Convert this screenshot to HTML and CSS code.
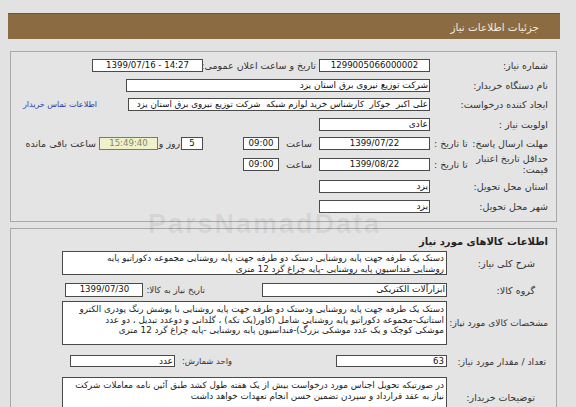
FILE: index.html
```html
<!DOCTYPE html>
<html lang="fa">
<head>
<meta charset="utf-8">
<title>جزئیات اطلاعات نیاز</title>
<link rel="stylesheet" href="styles.css">
</head>
<body>
<div class="page">
  <div class="header"><span class="title">جزئیات اطلاعات نیاز</span></div>

  <div class="panel p1">
    <div class="row">
      <div class="lbl">شماره نیاز:</div>
      <div class="box w111 center">1299005066000002</div>
      <div class="lbl-pub">تاریخ و ساعت اعلان عمومی:</div>
      <div class="box w111 center ltr">1399/07/16 - 14:27</div>
    </div>
    <div class="row">
      <div class="lbl">نام دستگاه خریدار:</div>
      <div class="box w304 txt">شرکت توزیع نیروی برق استان یزد</div>
    </div>
    <div class="row">
      <div class="lbl">ایجاد کننده درخواست:</div>
      <div class="box w302 txt long">علی اکبر  جوکار  کارشناس خرید لوازم شبکه  شرکت توزیع نیروی برق استان یزد</div>
      <a class="contact" href="#">اطلاعات تماس خریدار</a>
    </div>
    <div class="row">
      <div class="lbl">اولویت نیاز :</div>
      <div class="box w111 txt">عادی</div>
    </div>
    <div class="row">
      <div class="lbl split"><span>مهلت ارسال پاسخ:</span><span>تا تاریخ :</span></div>
      <div class="box w111 center">1399/07/22</div>
      <div class="hour">ساعت</div>
      <div class="box w36 center">09:00</div>
      <div class="box w22 center days">5</div>
      <div class="daylbl">روز و</div>
      <div class="box w59 center remain">15:49:40</div>
      <div class="remainlbl">ساعت باقی مانده</div>
    </div>
    <div class="row tall">
      <div class="lbl split"><span class="two">حداقل تاریخ اعتبار<br>قیمت:</span><span>تا تاریخ :</span></div>
      <div class="box w111 center">1399/08/22</div>
      <div class="hour">ساعت</div>
      <div class="box w36 center">09:00</div>
    </div>
    <div class="row r7">
      <div class="lbl">استان محل تحویل:</div>
      <div class="box w111 txt">یزد</div>
    </div>
    <div class="row">
      <div class="lbl">شهر محل تحویل:</div>
      <div class="box w111 txt">یزد</div>
    </div>
  </div>

  <div class="panel p2">
    <div class="ptitle">اطلاعات کالاهای مورد نیاز</div>
    <div class="row2 ta1">
      <div class="lbl2">شرح کلی نیاز:</div>
      <div class="area">دستک یک طرفه جهت پایه روشنایی دستک دو طرفه جهت پایه روشنایی مجموعه دکوراتیو پایه<br>روشنایی فنداسیون پایه روشنایی -پایه چراغ گرد 12 متری</div>
    </div>
    <div class="row2 grp">
      <div class="lbl2">گروه کالا:</div>
      <div class="box w185 txt">ابزارآلات الکتریکی</div>
      <div class="needlbl">تاریخ نیاز به کالا:</div>
      <div class="box w78 center">1399/07/30</div>
    </div>
    <div class="row2 ta2">
      <div class="lbl2 wide">مشخصات کالای مورد نیاز:</div>
      <div class="area">دستک یک طرفه جهت پایه روشنایی ودستک دو طرفه جهت پایه روشنایی با پوشش رنگ پودری الکترو<br>استاتیک-مجموعه دکوراتیو پایه روشنایی شامل (کاور(یک تکه) ، گلدانی و دوعدد تبدیل ، دو عدد<br>موشکی کوچک و یک عدد موشکی بزرگ)-فنداسیون پایه روشنایی -پایه چراغ گرد 12 متری</div>
    </div>
    <div class="row2 cnt">
      <div class="lbl2 mid">تعداد / مقدار مورد نیاز:</div>
      <div class="box w111 num">63</div>
      <div class="unitlbl">واحد شمارش:</div>
      <div class="box w105 txt">عدد</div>
    </div>
    <div class="row2 ta3">
      <div class="lbl2">توضیحات خریدار:</div>
      <div class="area">در صورتیکه تحویل اجناس مورد درخواست بیش از یک هفته طول کشد طبق آئین نامه معاملات شرکت<br>نیاز به عقد قرارداد و سپردن تضمین حسن انجام تعهدات خواهد داشت</div>
    </div>
  </div>

  <div class="watermark">ParsNamadData</div>
</div>
</body>
</html>
```

FILE: styles.css
```css
html, body {
  margin: 0;
  padding: 0;
  background: #e2e2e2;
}
body {
  font-family: "DejaVu Sans", "Noto Sans", sans-serif;
  font-size: 9.5px;
  color: #2b2b2b;
  overflow: hidden;
}
.page {
  position: relative;
  padding-top: 13px;
  height: 407px;
  box-sizing: border-box;
}
.header {
  margin-left: 8px;
  margin-right: 16px;
  height: 26px;
  background: #8b6b42;
  border-top: 1px solid #6e532f;
  box-sizing: border-box;
  direction: rtl;
  display: flex;
  align-items: center;
  padding-right: 21px;
}
.title {
  color: #f4ecdc;
  font-size: 10.4px;
}
.panel {
  margin-left: 10px;
  margin-right: 19px;
  border: 1px solid #a9a9a9;
  background: #e4e4e4;
  direction: rtl;
  box-sizing: border-box;
  padding-right: 8px;
}
.p1 {
  margin-top: 12px;
  height: 171px;
  padding-top: 4px;
}
.row {
  display: flex;
  align-items: center;
  height: 19.5px;
  white-space: nowrap;
}
.row.tall { height: 22px; }
.row.r7 { height: 21px; }
.lbl {
  width: 118px;
  flex: none;
  color: #333;
}
.lbl.split {
  display: flex;
  justify-content: space-between;
  align-items: center;
  padding-left: 4px;
  box-sizing: border-box;
}
.two { line-height: 10.5px; }
.box {
  box-sizing: border-box;
  height: 13px;
  border: 1px solid #4a4a4a;
  background: #fff;
  color: #111;
  flex: none;
  padding: 0 2px;
  line-height: 11px;
  overflow: hidden;
  white-space: nowrap;
  text-align: right;
  font-size: 8.6px;
}
.box.txt { font-size: 9px; padding: 0 1px; }
.box.long { font-size: 8.7px; white-space: pre; }
.center { text-align: center; }
.ltr { direction: ltr; }
.num { text-align: right; direction: ltr; }
.w111 { width: 111px; }
.w304 { width: 304px; }
.w302 { width: 302px; }
.w36 { width: 36px; }
.w22 { width: 22px; }
.w59 { width: 59px; }
.w185 { width: 185px; }
.w78 { width: 78px; }
.w105 { width: 105px; }
.lbl-pub {
  width: 116px;
  flex: none;
  padding-right: 3px;
  box-sizing: border-box;
  color: #333;
}
.contact {
  margin-right: 31px;
  color: #2f3aa6;
  text-decoration: none;
  font-size: 8px;
}
.hour {
  width: 40px;
  flex: none;
  text-align: center;
  color: #333;
}
.days { margin-right: 40px; }
.daylbl {
  width: 23px;
  flex: none;
  text-align: center;
  color: #333;
}
.remain {
  background: #f1f1c9;
  color: #85856a;
  border-color: #7a7a6a;
}
.remainlbl {
  margin-right: 3px;
  color: #333;
}
.p2 {
  margin-top: 6px;
  height: 200px;
  padding-top: 4px;
}
.ptitle {
  height: 18px;
  line-height: 18px;
  font-weight: bold;
  font-size: 10px;
  color: #222;
}
.row2 {
  display: flex;
  align-items: center;
  white-space: nowrap;
}
.lbl2 {
  width: 101px;
  flex: none;
  color: #333;
  padding-right: 13px;
  box-sizing: border-box;
}
.lbl2.wide { padding-right: 0; font-size: 9px; }
.lbl2.mid { padding-right: 2px; font-size: 9.2px; }
.area {
  box-sizing: border-box;
  width: 385px;
  flex: none;
  border: 1px solid #4a4a4a;
  background: #fff;
  color: #222;
  padding: 1px 2px;
  line-height: 10.5px;
  font-size: 8.8px;
  text-align: right;
  white-space: nowrap;
  overflow: hidden;
}
.ta1 .area { height: 24px; }
.grp { margin-top: 8px; height: 14px; }
.grp .box { height: 14px; }
.needlbl {
  margin-right: 57px;
  margin-left: 3px;
  flex: none;
  color: #333;
  font-size: 8.6px;
}
.ta2 { margin-top: 4px; }
.ta2 .area { height: 44px; padding-top: 2px; }
.cnt { margin-top: 10px; height: 12px; }
.cnt .box { height: 12px; line-height: 10px; }
.unitlbl {
  width: 161px;
  flex: none;
  padding-right: 104px;
  box-sizing: border-box;
  color: #333;
  font-size: 8.4px;
}
.ta3 { margin-top: 10px; }
.ta3 .area { height: 40px; padding-top: 2px; }
.watermark {
  position: absolute;
  left: 148px;
  top: 209px;
  font-family: "Liberation Sans", Arial, sans-serif;
  font-weight: bold;
  font-size: 27px;
  letter-spacing: 2px;
  color: rgba(0, 0, 0, 0.07);
  pointer-events: none;
}
```
